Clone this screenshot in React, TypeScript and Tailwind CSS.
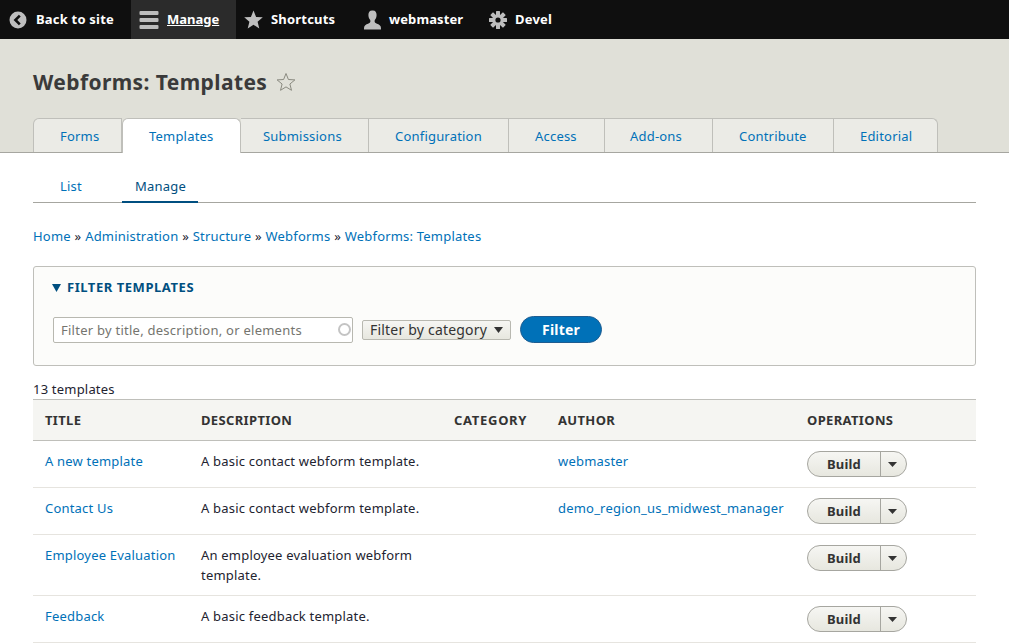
import React from "react";

function BackIcon() {
  return (
    <svg width="18" height="18" viewBox="0 0 18 18" className="shrink-0">
      <circle cx="9" cy="9" r="8.5" fill="#bebebe" />
      <path d="M10.8 4.6 6.4 9l4.4 4.4" fill="none" stroke="#0f0f0f" strokeWidth="2.6" />
    </svg>
  );
}
function MenuIcon() {
  return (
    <svg width="20" height="20" viewBox="0 0 20 20" className="shrink-0">
      <rect x="0.5" y="1" width="19" height="4" rx="1" fill="#bebebe" />
      <rect x="0.5" y="8" width="19" height="4" rx="1" fill="#bebebe" />
      <rect x="0.5" y="15" width="19" height="4" rx="1" fill="#bebebe" />
    </svg>
  );
}
function StarIcon() {
  return (
    <svg width="19" height="19" viewBox="0 0 19 19" className="shrink-0">
      <path d="M9.5 0.5 12.1 6.9 18.8 7.3 13.6 11.7 15.3 18.5 9.5 14.8 3.7 18.5 5.4 11.7 0.2 7.3 6.9 6.9Z" fill="#bebebe" />
    </svg>
  );
}
function UserIcon() {
  return (
    <svg width="20" height="20" viewBox="0 0 20 20" className="shrink-0">
      <path d="M10 0.5C7.6 0.5 6.4 2.4 6.4 5c0 2.2 .8 4 1.8 5 .4 1.4 .2 2.4-.8 3-1.6 1-4.2 1.6-5 3.2-.4 1-.4 2-.4 3.300h17c0-1.300 0-2.300-.4-3.300-.8-1.600-3.400-2.200-5-3.200-1-.6-1.200-1.600-.8-3 1-1 1.800-2.800 1.800-5 0-2.600-1.200-4.500-3.600-4.500Z" fill="#bebebe" />
    </svg>
  );
}
function GearIcon() {
  return (
    <svg width="18" height="18" viewBox="0 0 18 18" className="shrink-0">
      <g fill="#bebebe">
        <rect x="7" y="0" width="4" height="18" rx="0.5" />
        <rect x="7" y="0" width="4" height="18" rx="0.5" transform="rotate(45 9 9)" />
        <rect x="7" y="0" width="4" height="18" rx="0.5" transform="rotate(90 9 9)" />
        <rect x="7" y="0" width="4" height="18" rx="0.5" transform="rotate(135 9 9)" />
      </g>
      <circle cx="9" cy="9" r="5.6" fill="#bebebe" />
      <circle cx="9" cy="9" r="2.6" fill="#0f0f0f" />
    </svg>
  );
}

function ToolbarItem({ icon, label, className = "", textClass = "" }: { icon: React.ReactNode; label: string; className?: string; textClass?: string }) {
  return (
    <div className={"flex h-full items-center " + className}>
      {icon}
      <span className={"text-[13px] font-bold text-white " + textClass}>{label}</span>
    </div>
  );
}

const primary = [
  ["Forms", "w-[89px] pl-[26px]"],
  ["Templates", "w-[119px] pl-[26px]"],
  ["Submissions", "w-[128px] pl-[22px]"],
  ["Configuration", "w-[140px] pl-[26px]"],
  ["Access", "w-[96px] pl-[26px]"],
  ["Add-ons", "w-[108px] pl-[25px]"],
  ["Contribute", "w-[121px] pl-[26px]"],
  ["Editorial", "w-[104px] pl-[26px]"],
];

const rows = [
  { t: "A new template", d: "A basic contact webform template.", a: "webmaster", h: "h-[47px]" },
  { t: "Contact Us", d: "A basic contact webform template.", a: "demo_region_us_midwest_manager", h: "h-[47px]" },
  { t: "Employee Evaluation", d: "An employee evaluation webform template.", a: "", h: "h-[61px]" },
  { t: "Feedback", d: "A basic feedback template.", a: "", h: "h-[47px]" },
];

function BuildButton() {
  return (
    <div className="flex h-[26px] w-[100px] rounded-full border border-[#a6a6a0] bg-gradient-to-b from-[#f6f6f3] to-[#e7e7df] text-[13px] font-bold text-[#333]">
      <span className="flex w-[73px] items-center justify-center border-r border-[#a6a6a0] pt-[1px]">Build</span>
      <span className="flex flex-1 items-center justify-center pr-[2px]">
        <svg width="9" height="5" viewBox="0 0 9 5"><path d="M0 0h9L4.500 5Z" fill="#333" /></svg>
      </span>
    </div>
  );
}

export default function App() {
  return (
    <div className="h-[643px] w-[1009px] overflow-hidden bg-white font-['Noto_Sans','Open_Sans',sans-serif] text-[13px] tracking-[0.2px] text-[#222330]">
      <div className="flex h-[39px] items-center bg-[#0f0f0f] shadow-[0_1px_2px_rgba(0,0,0,0.3)]">
        <ToolbarItem className="w-[131px] gap-[8px] pl-[9px]" icon={<BackIcon />} label="Back to site" textClass="ml-[1px]" />
        <ToolbarItem className="w-[105px] gap-[8px] bg-[#2b2b2b] pl-[8px]" icon={<MenuIcon />} label="Manage" textClass="underline tracking-[0px]" />
        <ToolbarItem className="w-[118px] gap-[8px] pl-[8px]" icon={<StarIcon />} label="Shortcuts" />
        <ToolbarItem className="w-[126px] gap-[7px] pl-[8px]" icon={<UserIcon />} label="webmaster" textClass="tracking-[0.1px]" />
        <ToolbarItem className="gap-[8px] pl-[9px]" icon={<GearIcon />} label="Devel" />
      </div>

      <div className="h-[114px] border-b border-[#a6a6a0] bg-[#e0e0d8] px-[33px]">
        <div className="flex h-[79px] items-start gap-[9px] pt-[27px]">
          <h1 className="text-[21px] font-bold leading-[32px] tracking-[0.4px] text-[#3a3a3a]">Webforms: Templates</h1>
          <svg width="20" height="20" viewBox="0 0 20 20" className="mt-[6px]">
            <path d="M10 1.500 12.400 7.500 18.900 7.900 13.900 12 15.500 18.300 10 14.900 4.500 18.300 6.100 12 1.100 7.900 7.600 7.500Z" fill="none" stroke="#8a8a80" strokeWidth="1" />
          </svg>
        </div>
        <div className="flex h-[35px]">
          {primary.map(([label, w], i) => {
            const active = label === "Templates";
            return (
              <div
                key={label}
                className={
                  "flex items-center border-t border-r border-[#bfbfba] text-[13px] " + w + " " +
                  (i === 0 ? "rounded-tl-[6px] border-l " : "") +
                  (i === primary.length - 1 ? "rounded-tr-[6px] " : "") +
                  (active
                    ? "z-10 h-[35px] rounded-t-[6px] border-l border-[#a6a6a0] bg-white pt-[1px] text-[#0071b8]"
                    : "h-[34px] bg-[#ebebe6] pt-[2px] text-[#0071b8]")
                }
              >
                {label}
              </div>
            );
          })}
        </div>
      </div>

      <div className="px-[33px]">
        <div className="flex h-[50px] border-b border-[#a6a6a0]">
          <div className="w-[89px] pl-[27px] pt-[24px] leading-[18px] text-[#0071b8]">List</div>
          <div className="h-[50px] w-[76px] border-b-2 border-[#004f80] pl-[13px] pt-[24px] leading-[18px] text-[#004f80]">Manage</div>
        </div>

        <div className="mt-[24px] flex h-[20px] items-center gap-[3.75px] text-[#0071b8]">
          <span>Home</span><span className="text-[#222330]">»</span>
          <span>Administration</span><span className="text-[#222330]">»</span>
          <span>Structure</span><span className="text-[#222330]">»</span>
          <span>Webforms</span><span className="text-[#222330]">»</span>
          <span>Webforms: Templates</span>
        </div>

        <div className="mt-[19px] h-[100px] rounded-[3px] border border-[#bfbfba] bg-[#fcfcfa] px-[18px]">
          <div className="flex h-[41px] items-center gap-[6px] text-[13px] font-bold uppercase tracking-[0.55px] text-[#004f80]">
            <svg width="9" height="8" viewBox="0 0 9 8"><path d="M0 0h9L4.500 8Z" fill="#004f80" /></svg>
            Filter templates
          </div>
          <div className="mt-[8px] flex items-center pl-[1px]">
            <div className="flex h-[26px] w-[300px] items-center justify-between rounded-[2px] border border-[#b8b8b0] bg-white pl-[7px] pr-[1px] text-[13px] tracking-[0.25px] text-[#75756f]">
              <span className="pt-[2px]">Filter by title, description, or elements</span>
              <span className="h-[13px] w-[13px] rounded-full border-2 border-[#c4c4c4]" />
            </div>
            <div className="ml-[9px] flex h-[20px] w-[149px] items-center justify-between rounded-[2px] border border-[#b8b8b0] bg-gradient-to-b from-[#f6f6f3] to-[#e7e7df] px-[7px] text-[14px] text-[#333]">
              <span>Filter by category</span>
              <svg width="9" height="6" viewBox="0 0 9 6"><path d="M0 0h9L4.500 6Z" fill="#333" /></svg>
            </div>
            <div className="ml-[9px] flex h-[27px] w-[82px] items-center justify-center rounded-full border border-[#1e5c90] bg-[#0071b8] text-[14px] font-bold text-white">Filter</div>
          </div>
        </div>

        <div className="mt-[14px] h-[19px] leading-[19px] text-[#222330]">13 templates</div>

        <table className="w-full table-fixed border-collapse">
          <colgroup>
            <col className="w-[156px]" />
            <col className="w-[253px]" />
            <col className="w-[104px]" />
            <col className="w-[249px]" />
            <col />
          </colgroup>
          <thead>
            <tr className="h-[41px] border-t border-b border-[#bfbfba] bg-[#f5f5f2] text-left text-[13px] font-bold uppercase tracking-[0.35px] text-[#333]">
              <th className="px-[12px] pt-[2px] font-bold">Title</th>
              <th className="px-[12px] pt-[2px] font-bold">Description</th>
              <th className="px-[12px] pt-[2px] font-bold tracking-[0.7px]">Category</th>
              <th className="px-[12px] pt-[2px] font-bold">Author</th>
              <th className="px-[12px] pt-[2px] font-bold">Operations</th>
            </tr>
          </thead>
          <tbody>
            {rows.map((r) => (
              <tr key={r.t} className={r.h + " border-b border-[#e6e4df] align-top"}>
                <td className="px-[12px] pt-[11px] text-[#0071b8]">{r.t}</td>
                <td className="px-[12px] pt-[10px] leading-[20px]"><div className="w-[225px]">{r.d}</div></td>
                <td />
                <td className="px-[12px] pt-[11px] whitespace-nowrap text-[#0071b8]">{r.a}</td>
                <td className="px-[12px] pt-[10px]"><BuildButton /></td>
              </tr>
            ))}
          </tbody>
        </table>
      </div>
    </div>
  );
}
